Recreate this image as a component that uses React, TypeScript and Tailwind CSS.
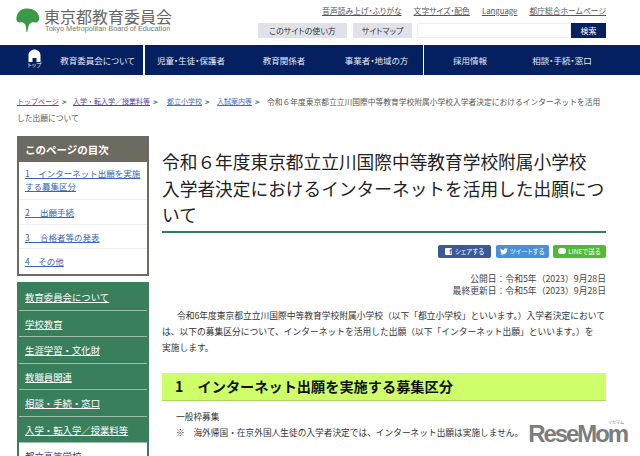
const jp = "font-['Noto_Sans_CJK_JP','Noto_Sans',sans-serif]"
const palt = "[font-feature-settings:'palt']"

const CRUMBS = [
  { label: "トップページ", color: "text-[#7a3d9a]", w: "w-[56px]" },
  { label: "入学・転入学／授業料等", color: "text-[#5b3f9c]", w: "w-[94px]" },
  { label: "都立小学校", color: "text-[#3f6fc0]", w: "w-[50px]" },
  { label: "入試案内等", color: "text-[#3f6fc0]", w: "w-[50px]" },
]

const TOC = [
  { label: "1　インターネット出願を実施する募集区分", h: "h-[37px] pt-[5px] leading-[13px]" },
  { label: "2　 出願手続", h: "h-[25px] leading-[24px] border-t border-[#eee]" },
  { label: "3　 合格者等の発表", h: "h-[24px] leading-[24px] border-t border-[#eee]" },
  { label: "4　その他", h: "h-[26px] leading-[24px] border-t border-[#eee]" },
]

const MENU = ["教育委員会について", "学校教育", "生涯学習・文化財", "教職員関連", "相談・手続・窓口", "入学・転入学／授業料等"]

function Ginkgo() {
  return (
    <svg width="24" height="25" viewBox="0 0 30 26" preserveAspectRatio="none" className="shrink-0">
      <path d="M12.5 0.5C20 0 28 3 29 9.5C29.5 13 27 15.5 23.5 15C20 14.5 17 15 15.5 19.5L14 25L13 25L12.5 19.5C11.5 15.5 8 14.5 5 15C2 15.5 0 13.5 0.5 10.5C1.5 4 6 1 12.5 0.5Z" fill="#3a9a48" />
    </svg>
  )
}

function Logo() {
  return (
    <div className="flex items-start gap-[4px] pl-4 pt-2 h-[45px]">
      <Ginkgo />
      <div className="flex flex-col">
        <span className={`${jp} text-[16px] leading-[16px] text-[#666] whitespace-nowrap`}>東京都教育委員会</span>
        <span className="font-['Liberation_Sans',sans-serif] text-[7.3px] leading-[9px] text-[#777] pl-[1px] whitespace-nowrap">Tokyo Metropolitan Board of Education</span>
      </div>
    </div>
  )
}

function TopLinks() {
  const links = ["音声読み上げ・ふりがな", "文字サイズ・配色", "Language", "都庁総合ホームページ"]
  return (
    <div className="flex flex-col items-end pr-[34px] pt-[5px]">
      <div className={`${jp} ${palt} flex gap-[12px] text-[7.8px] leading-[12px] text-[#555] underline whitespace-nowrap`}>
        {links.map((l) => <span key={l}>{l}</span>)}
      </div>
      <div className={`${jp} ${palt} flex mt-[6px] h-[15px] text-[8px] leading-[15px] text-center`}>
        <div className="w-[89px] bg-[#e0e2e8] text-[#334] whitespace-nowrap">このサイトの使い方</div>
        <div className="w-[59px] ml-[6px] bg-[#e0e2e8] text-[#334] whitespace-nowrap">サイトマップ</div>
        <div className="w-[154px] ml-[5px] bg-white border border-[#eee]" />
        <div className="w-[35px] bg-[#042061] text-white">検索</div>
      </div>
    </div>
  )
}

function NavBar() {
  return (
    <div className={`${jp} ${palt} flex h-[30px] bg-[#042061] text-[8.5px] leading-[30px] text-[#e8ebf3] text-center whitespace-nowrap`}>
      <div className="w-[52px] flex flex-col items-center pl-[17px] pt-[4px]">
        <svg width="13" height="13" viewBox="0 0 13 13">
          <path d="M6.5 0.5C9.5 0.5 12.5 3 12.5 6L12.5 13L8.5 13L8.5 9L4.5 9L4.5 13L0.5 13L0.5 6C0.5 3 3.5 0.5 6.5 0.5Z" fill="#fff" />
        </svg>
        <span className="text-[5.5px] leading-[7px] text-white">トップ</span>
      </div>
      <div className="w-[91px]">教育委員会について</div>
      <div className="w-[1.5px] bg-white" />
      <div className="w-[93px]">児童・生徒・保護者</div>
      <div className="w-[93px]">教育関係者</div>
      <div className="w-[92px]">事業者・地域の方</div>
      <div className="w-[1.5px] bg-white" />
      <div className="w-[92px]">採用情報</div>
      <div className="w-[92px]">相談・手続・窓口</div>
    </div>
  )
}

function Breadcrumb() {
  return (
    <div className={`${jp} px-[17px] pt-[19px] text-[7.75px] leading-[15.5px] text-[#555]`}>
      <div className="flex whitespace-nowrap">
        {CRUMBS.map((c) => (
          <span key={c.label} className={`flex ${c.w}`}>
            <span className={`${c.color} text-[7px] underline`}>{c.label}</span>
            <span className="text-[#2f8050] font-bold ml-[3px]">&gt;</span>
          </span>
        ))}
        <span>令和６年度東京都立立川国際中等教育学校附属小学校入学者決定におけるインターネットを活用</span>
      </div>
      <div>した出願について</div>
    </div>
  )
}

function Sidebar() {
  return (
    <div className={`${jp} w-[132px] shrink-0`}>
      <div className="border-[2px] border-[#6d6a62] border-t-0">
        <div className="bg-[#6d6a62] h-[26px] pl-[6px] text-[10.5px] font-bold leading-[28px] text-white">このページの目次</div>
        <div className="bg-white text-[8.5px] text-[#3565b5] underline">
          {TOC.map((t) => (
            <div key={t.label} className={`px-[6px] ${t.h}`}>{t.label}</div>
          ))}
        </div>
      </div>
      <div className="mt-[6px] bg-[#3a7f5c] border-[2px] border-[#3a7f5c] border-b-0 text-[9.4px] text-white underline">
        {MENU.map((m) => (
          <div key={m} className="h-[26.5px] leading-[26px] pl-[6px] border-b border-[#9dbfac] whitespace-nowrap">{m}</div>
        ))}
        <div className="bg-white h-[20px] pl-[6px] pt-[6px] text-[#2a3f80] leading-[14px]">都立高等学校</div>
      </div>
    </div>
  )
}

function ShareButtons() {
  return (
    <div className={`${jp} ${palt} flex justify-end gap-[4.5px] mt-[12px] h-[13px] text-[6.5px] leading-[13px] text-white`}>
      <div className="w-[53px] rounded-[2px] bg-[#3b5998] flex items-center justify-center gap-[3px] whitespace-nowrap">
        <span className="w-[7px] h-[7px] bg-white rounded-[1px] text-[#3b5998] text-[7px] leading-[8px] font-bold text-right font-['Liberation_Sans',sans-serif]">f</span>
        シェアする
      </div>
      <div className="w-[53px] rounded-[2px] bg-[#4a90d9] flex items-center justify-center gap-[2px] whitespace-nowrap">
        <svg width="8" height="7" viewBox="0 0 24 20">
          <path d="M24 2.4c-.9.4-1.8.7-2.8.8 1-.6 1.8-1.6 2.2-2.7-1 .6-2 1-3.1 1.2C19.3.7 18 0 16.6 0c-2.7 0-4.9 2.2-4.9 4.9 0 .4 0 .8.1 1.1C7.7 5.8 4.1 3.9 1.7.9c-.4.7-.7 1.6-.7 2.5 0 1.7.9 3.2 2.2 4.1-.8 0-1.6-.2-2.2-.6v.1c0 2.4 1.7 4.4 3.9 4.8-.7.2-1.5.2-2.2.1.6 2 2.4 3.4 4.6 3.4-1.7 1.3-3.8 2.1-6.1 2.1-.4 0-.8 0-1.2-.1C2.2 18.3 4.8 19 7.5 19c9.1 0 14-7.5 14-14v-.6c1-.7 1.8-1.6 2.5-2Z" fill="#fff" />
        </svg>
        ツイートする
      </div>
      <div className="w-[53px] rounded-[2px] bg-[#52b934] flex items-center justify-center gap-[2px] whitespace-nowrap">
        <span className="w-[8px] h-[6px] bg-white rounded-[3px]" />
        LINEで送る
      </div>
    </div>
  )
}

function Content() {
  return (
    <div className={`${jp} w-[444px] ml-[13px] text-[#333]`}>
      <h1 className="text-[17.7px] leading-[26.5px] font-normal text-[#222] pt-[12px] pb-[3px] border-b-[2px] border-[#2f8050] whitespace-nowrap">
        令和６年度東京都立立川国際中等教育学校附属小学校<br />入学者決定におけるインターネットを活用した出願につ<br />いて
      </h1>
      <ShareButtons />
      <div className="text-[8.8px] leading-[12.5px] text-right mt-[15px] text-[#444]">
        <div>公開日：令和5年（2023）9月28日</div>
        <div>最終更新日：令和5年（2023）9月28日</div>
      </div>
      <p className="text-[8.75px] leading-[16px] mt-[10px] indent-[15px] whitespace-nowrap">
        令和6年度東京都立立川国際中等教育学校附属小学校（以下「都立小学校」といいます。）入学者決定において<br />は、以下の募集区分について、インターネットを活用した出願（以下「インターネット出願」といいます。）を<br />実施します。
      </p>
      <h2 className="bg-[#ceff6a] border-b border-[#a9d85f] h-[28px] pl-[13px] mt-[17px] text-[14.2px] leading-[27px] font-bold text-[#111] whitespace-pre">1　インターネット出願を実施する募集区分</h2>
      <div className="pl-[14px] text-[8.7px] leading-[16px] mt-[8px]">
        <div>一般枠募集</div>
        <div className="whitespace-nowrap">※　海外帰国・在京外国人生徒の入学者決定では、インターネット出願は実施しません。</div>
      </div>
    </div>
  )
}

export default function App() {
  return (
    <div className="relative w-[640px] h-[456px] overflow-hidden bg-white">
      <div className="flex justify-between h-[45px]">
        <Logo />
        <TopLinks />
      </div>
      <NavBar />
      <Breadcrumb />
      <div className="flex pl-[17px] mt-[11px]">
        <Sidebar />
        <Content />
      </div>
      {/* ウォーターマーク */}
      <div className="absolute right-[13px] bottom-[12px] font-['Liberation_Sans',sans-serif] font-bold text-[24px] leading-[20px] tracking-[-2.1px] text-[#7d7d7d]">
        ReseMom
        <span className={`${jp} absolute right-[3px] -top-[4px] text-[4px] leading-[4px] tracking-normal font-normal`}>リセマム</span>
      </div>
    </div>
  )
}
